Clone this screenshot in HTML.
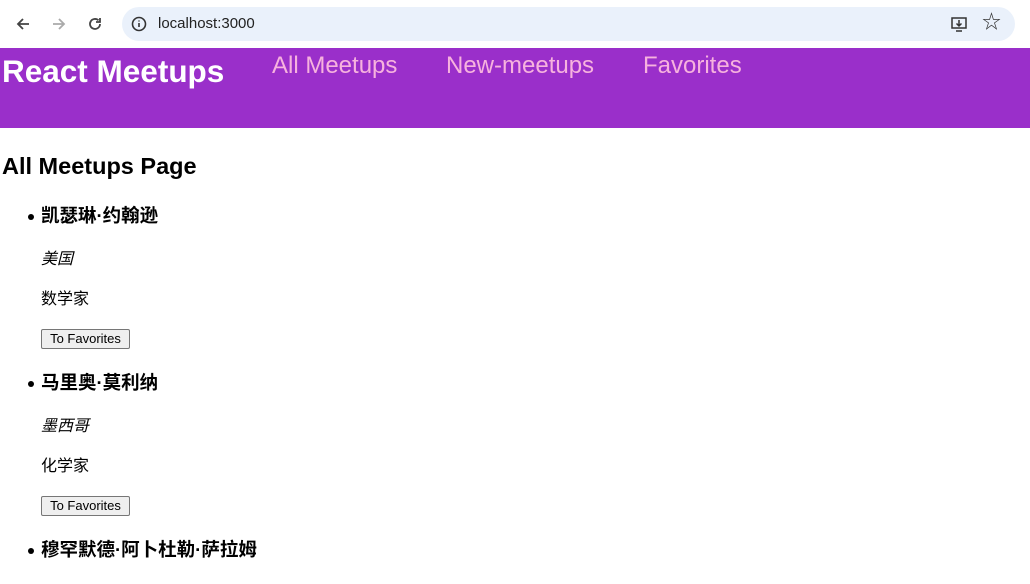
<!DOCTYPE html>
<html><head><meta charset="utf-8"><style>
body{margin:0;width:1030px;height:584px;overflow:hidden;background:#fff;font-family:"Liberation Sans","Noto Sans CJK SC",sans-serif;position:relative}
.a{position:absolute;white-space:nowrap;line-height:1}
.bar{position:absolute;left:0;top:0;width:1030px;height:48px;background:#fff}
.url{position:absolute;left:122px;top:7px;width:893px;height:34px;border-radius:17px;background:#eaf1fb}
.hdr{position:absolute;left:0;top:48px;width:1030px;height:80px;background:#9a2fca}
.nav{color:#f7b2de;font-size:24px}
.t{font-size:18.5px;font-weight:bold;color:#000}
.p{font-size:16px;color:#000}
.btn{position:absolute;left:41px;width:87px;height:18px;border:1px solid #767676;background:#efefef;border-radius:2px;font-size:13px;text-align:center;line-height:18px;color:#000}
.dot{position:absolute;left:28px;width:6px;height:6px;border-radius:3px;background:#000}
</style></head><body>
<div class="bar"></div>
<div class="url"></div>
<svg class="a" style="left:14px;top:15px" width="18" height="18" viewBox="0 0 18 18"><path d="M15 9H4M9 4L4 9l5 5" stroke="#444" stroke-width="1.8" fill="none"/></svg>
<svg class="a" style="left:50px;top:15px" width="18" height="18" viewBox="0 0 18 18"><path d="M3 9h11M9 4l5 5-5 5" stroke="#aaa" stroke-width="1.8" fill="none"/></svg>
<svg class="a" style="left:86px;top:15px" width="18" height="18" viewBox="0 0 18 18"><path d="M14 9a5 5 0 1 1-1.5-3.6M14 3v4h-4" stroke="#444" stroke-width="1.8" fill="none"/></svg>
<svg class="a" style="left:130px;top:15px" width="18" height="18" viewBox="0 0 18 18"><circle cx="9" cy="9" r="6.5" stroke="#333" stroke-width="1.6" fill="none"/><path d="M9 8v4M9 5.5v1" stroke="#333" stroke-width="1.6"/></svg>
<div class="a" style="left:158px;top:16px;font-size:15px;color:#222">localhost:3000</div>
<svg class="a" style="left:949px;top:14px" width="20" height="20" viewBox="0 0 20 20"><path d="M3 4h14v10H3zM7 17h6M10 6v6M7.5 9.5 10 12l2.5-2.5" stroke="#333" stroke-width="1.5" fill="none"/></svg>
<div class="a" style="left:982px;top:13px;font-size:19px;color:#333">☆</div>
<div class="hdr"></div>
<div class="a" style="left:2px;top:56px;font-size:31.5px;font-weight:bold;color:#fff">React Meetups</div>
<div class="a nav" style="left:272px;top:54px">All Meetups</div>
<div class="a nav" style="left:446px;top:54px">New-meetups</div>
<div class="a nav" style="left:643px;top:54px">Favorites</div>
<div class="a" style="left:2px;top:155px;font-size:23.5px;font-weight:bold">All Meetups Page</div>

<div class="dot" style="top:214px"></div>
<div class="a t" style="left:41px;top:207px">凯瑟琳·约翰逊</div>
<div class="a p" style="left:41px;top:252px;font-style:italic">美国</div>
<div class="a p" style="left:41px;top:292px">数学家</div>
<div class="btn" style="top:329px">To Favorites</div>

<div class="dot" style="top:381px"></div>
<div class="a t" style="left:41px;top:374px">马里奥·莫利纳</div>
<div class="a p" style="left:41px;top:419px;font-style:italic">墨西哥</div>
<div class="a p" style="left:41px;top:459px">化学家</div>
<div class="btn" style="top:496px">To Favorites</div>

<div class="dot" style="top:548px"></div>
<div class="a t" style="left:41px;top:541px">穆罕默德·阿卜杜勒·萨拉姆</div>
</body></html>
